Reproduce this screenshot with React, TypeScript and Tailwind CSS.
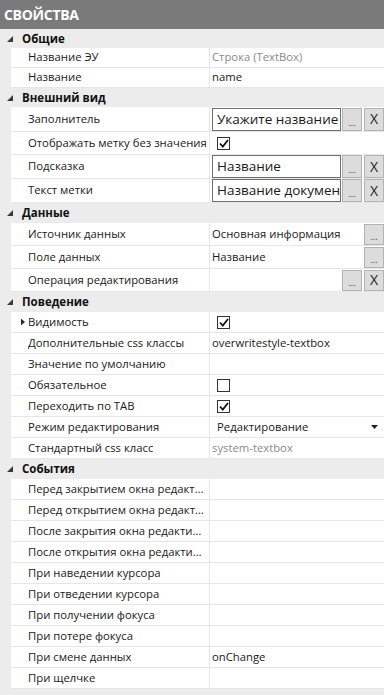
import React from "react";

const Tri = () => (
  <svg width="6" height="6" viewBox="0 0 6 6" className="ml-[7px] mr-[9px] shrink-0">
    <polygon points="6,0 6,6 0,6" fill="#3a3a3a" />
  </svg>
);

function Cat({ title, h }: { title: string; h: string }) {
  return (
    <div className={`flex items-center bg-[#ececec] ${h}`}>
      <Tri />
      <span className="text-[11.5px] font-bold text-[#111]">{title}</span>
    </div>
  );
}

function Row({
  label,
  h,
  children,
  marker,
}: {
  label: string;
  h: string;
  children?: React.ReactNode;
  marker?: boolean;
}) {
  return (
    <div className={`flex bg-[#ececec] ${h}`}>
      <div className="w-[11px] shrink-0" />
      <div className="flex flex-1 bg-white border-b border-[#e6e6e6] min-w-0">
        <div className="relative w-[199px] shrink-0 pl-[17px] pr-[1px] flex items-center border-r border-[#e6e6e6] overflow-hidden">
          {marker && (
            <svg width="4" height="7" viewBox="0 0 4 7" className="absolute left-[10px] top-1/2 -translate-y-1/2">
              <polygon points="0,0 4,3.5 0,7" fill="#2a2a55" />
            </svg>
          )}
          <span className="block overflow-hidden text-ellipsis whitespace-nowrap text-[11.3px] text-[#1a1a1a]">{label}</span>
        </div>
        <div className="flex flex-1 items-center min-w-0">{children}</div>
      </div>
    </div>
  );
}

const Val = ({ t, gray }: { t: string; gray?: boolean }) => (
  <span className={`pl-[2px] text-[11.3px] whitespace-nowrap overflow-hidden ${gray ? "text-[#8a8a8a]" : "text-[#1a1a1a]"}`}>{t}</span>
);

const Dots = ({ cls }: { cls: string }) => (
  <div className={`shrink-0 w-[20px] bg-[#dcdcdc] border border-[#b3b3b3] flex items-end justify-center pb-[3px] text-[9px] leading-none text-[#333] ${cls}`}>...</div>
);
const XBtn = ({ cls }: { cls: string }) => (
  <div className={`shrink-0 w-[20px] bg-[#dcdcdc] border border-[#b3b3b3] flex items-center justify-center text-[14px] leading-none text-[#222] ${cls}`}>X</div>
);

const InputVal = ({ t }: { t: string }) => (
  <div className="flex items-center w-full">
    <div className="ml-[2px] w-[129px] h-[23px] shrink-0 border border-[#6e6e6e] bg-white flex items-center pl-[4px] overflow-hidden whitespace-nowrap text-[13.5px] text-[#1a1a1a]">
      {t}
    </div>
    <Dots cls="h-[23px] ml-[1px]" />
    <XBtn cls="h-[23px] ml-[2px]" />
  </div>
);

const Check = ({ on }: { on?: boolean }) => (
  <div className="ml-[7px] w-[13px] h-[13px] border border-[#333] bg-white flex items-center justify-center">
    {on && (
      <svg width="10" height="9" viewBox="0 0 10 9">
        <path d="M1 4.5 L3.8 7.5 L9 1" stroke="#111" strokeWidth="1.8" fill="none" />
      </svg>
    )}
  </div>
);

export default function App() {
  return (
    <div className="w-[384px] h-[695px] bg-[#ececec] overflow-hidden font-['Open_Sans','Noto_Sans',sans-serif]">
      <div className="h-[29px] bg-[#7a7a7a] flex items-center pl-[4px] text-white font-bold text-[14px] tracking-[-0.3px]">СВОЙСТВА</div>

      <Cat title="Общие" h="h-[19px]" />
      <Row label="Название ЭУ" h="h-[20px]"><Val t="Строка (TextBox)" gray /></Row>
      <Row label="Название" h="h-[20px]"><Val t="name" /></Row>

      <Cat title="Внешний вид" h="h-[19px]" />
      <Row label="Заполнитель" h="h-[25px]"><InputVal t="Укажите название документа" /></Row>
      <Row label="Отображать метку без значения" h="h-[23px]"><Check on /></Row>
      <Row label="Подсказка" h="h-[24px]"><InputVal t="Название" /></Row>
      <Row label="Текст метки" h="h-[24px]"><InputVal t="Название документа" /></Row>

      <Cat title="Данные" h="h-[20px]" />
      <Row label="Источник данных" h="h-[23px]">
        <div className="flex items-center justify-between w-full">
          <Val t="Основная информация" />
          <Dots cls="h-[21px]" />
        </div>
      </Row>
      <Row label="Поле данных" h="h-[23px]">
        <div className="flex items-center justify-between w-full">
          <Val t="Название" />
          <Dots cls="h-[21px]" />
        </div>
      </Row>
      <Row label="Операция редактирования" h="h-[23px]">
        <div className="flex items-center justify-end w-full">
          <Dots cls="h-[21px]" />
          <XBtn cls="h-[21px] ml-[2px]" />
        </div>
      </Row>

      <Cat title="Поведение" h="h-[20px]" />
      <Row label="Видимость" h="h-[21px]" marker><Check on /></Row>
      <Row label="Дополнительные css классы" h="h-[21px]"><Val t="overwritestyle-textbox" /></Row>
      <Row label="Значение по умолчанию" h="h-[21px]" />
      <Row label="Обязательное" h="h-[21px]"><Check /></Row>
      <Row label="Переходить по TAB" h="h-[21px]"><Check on /></Row>
      <Row label="Режим редактирования" h="h-[21px]">
        <div className="flex items-center justify-between w-full pr-[6px]">
          <span className="pl-[7px] text-[11.3px] text-[#1a1a1a]">Редактирование</span>
          <svg width="7" height="4" viewBox="0 0 7 4"><polygon points="0,0 7,0 3.5,4" fill="#222" /></svg>
        </div>
      </Row>
      <Row label="Стандартный css класс" h="h-[21px]"><Val t="system-textbox" gray /></Row>

      <Cat title="События" h="h-[20px]" />
      <Row label="Перед закрытием окна редактирования" h="h-[21px]" />
      <Row label="Перед открытием окна редактирования" h="h-[21px]" />
      <Row label="После закрытия окна редактирования" h="h-[21px]" />
      <Row label="После открытия окна редактирования" h="h-[21px]" />
      <Row label="При наведении курсора" h="h-[21px]" />
      <Row label="При отведении курсора" h="h-[21px]" />
      <Row label="При получении фокуса" h="h-[21px]" />
      <Row label="При потере фокуса" h="h-[21px]" />
      <Row label="При смене данных" h="h-[21px]"><Val t="onChange" /></Row>
      <Row label="При щелчке" h="h-[21px]" />
    </div>
  );
}
